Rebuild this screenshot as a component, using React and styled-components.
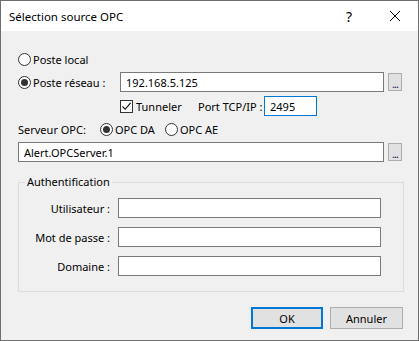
import React, { useState } from 'react';
import styled, { createGlobalStyle } from 'styled-components';

const uiFont = "'Noto Sans', 'Liberation Sans', sans-serif";

const GlobalStyle = createGlobalStyle`
 html, body {
  margin: 0;
  padding: 0;
  background: #ffffff;
 }
 body {
  font-family: ${uiFont};
  font-size: 11px;
  color: #000000;
 }
`;

export default function App() {
 const [source, setSource] = useState('reseau');
 const [server, setServer] = useState('da');
 const [tunnel, setTunnel] = useState(true);

 return (
  <Window>
   <GlobalStyle />
   <TitleBar>
    <Title>Sélection source OPC</Title>
    <TitleButton>?</TitleButton>
    <TitleButton>
     <svg width='12' height='12' viewBox='0 0 12 12'>
      <path d='M1 1 L11 11 M11 1 L1 11' stroke='#000' strokeWidth='1' />
     </svg>
    </TitleButton>
   </TitleBar>

   <Body>
    <Row height={14} top={21}>
     <Choice onClick={() => setSource('local')}>
      <Radio checked={source === 'local'} />
      Poste local
     </Choice>
    </Row>

    <Row height={20} top={6}>
     <LabelCell width={102}>
      <Choice onClick={() => setSource('reseau')}>
       <Radio checked={source === 'reseau'} />
       Poste réseau :
      </Choice>
     </LabelCell>
     <TextField width={264} defaultValue='192.168.5.125' readOnly />
     <Browse>...</Browse>
    </Row>

    <Row height={20} top={4} indent={102}>
     <Choice width={78} onClick={() => setTunnel(!tunnel)}>
      <Check checked={tunnel}>
       {tunnel && (
        <svg width='11' height='11' viewBox='0 0 11 11'>
         <path d='M1.5 5.5 L4.2 8.3 L9.6 1.8' stroke='#000' strokeWidth='1.1' fill='none' />
        </svg>
       )}
      </Check>
      Tunneler
     </Choice>
     <Caption width={66}>Port TCP/IP :</Caption>
     <TextField width={53} focused defaultValue='2495' readOnly />
    </Row>

    <Row height={14} top={6}>
     <Caption width={82}>Serveur OPC:</Caption>
     <Choice width={65} onClick={() => setServer('da')}>
      <Radio checked={server === 'da'} />
      OPC DA
     </Choice>
     <Choice onClick={() => setServer('ae')}>
      <Radio checked={server === 'ae'} />
      OPC AE
     </Choice>
    </Row>

    <Row height={20} top={6}>
     <TextField width={366} defaultValue='Alert.OPCServer.1' readOnly />
     <Browse>...</Browse>
    </Row>

    <Group>
     <Legend>Authentification</Legend>
     <AuthGrid>
      <AuthLabel>Utilisateur :</AuthLabel>
      <TextField width={263} readOnly />
      <AuthLabel>Mot de passe :</AuthLabel>
      <TextField width={263} readOnly />
      <AuthLabel>Domaine :</AuthLabel>
      <TextField width={263} readOnly />
     </AuthGrid>
    </Group>

    <Footer>
     <DialogButton primary>OK</DialogButton>
     <DialogButton>Annuler</DialogButton>
    </Footer>
   </Body>
  </Window>
 );
}

const Window = styled.div`
 width: 419px;
 height: 341px;
 box-sizing: border-box;
 border: 1px solid #6e6e6e;
 background: #f0f0f0;
 display: flex;
 flex-direction: column;
`;

const TitleBar = styled.div`
 height: 30px;
 background: #ffffff;
 display: flex;
 align-items: center;
 padding-left: 8px;
 flex-shrink: 0;
`;

const Title = styled.div`
 flex: 1;
 font-size: 11.5px;
 color: #000000;
`;

const TitleButton = styled.div`
 width: 46px;
 height: 30px;
 display: flex;
 align-items: center;
 justify-content: center;
 font-size: 14px;
`;

const Body = styled.div`
 flex: 1;
 display: flex;
 flex-direction: column;
 padding: 0 15px 0 17px;
`;

const Row = styled.div`
 display: flex;
 align-items: center;
 height: ${(p) => p.height}px;
 margin-top: ${(p) => p.top}px;
 padding-left: ${(p) => p.indent || 0}px;
`;

const LabelCell = styled.div`
 width: ${(p) => p.width}px;
 flex-shrink: 0;
 display: flex;
 align-items: center;
`;

const Choice = styled.label`
 display: flex;
 align-items: center;
 gap: 2px;
 cursor: default;
 white-space: nowrap;
 width: ${(p) => (p.width ? `${p.width}px` : 'auto')};
 flex-shrink: 0;
`;

const Radio = styled.span`
 width: 13px;
 height: 13px;
 box-sizing: border-box;
 border: 1px solid #333333;
 border-radius: 50%;
 background: #ffffff;
 display: flex;
 align-items: center;
 justify-content: center;
 flex-shrink: 0;
 &::after {
  content: '';
  width: 7px;
  height: 7px;
  border-radius: 50%;
  background: #333333;
  display: ${(p) => (p.checked ? 'block' : 'none')};
 }
`;

const Check = styled.span`
 width: 13px;
 height: 13px;
 box-sizing: border-box;
 border: 1px solid #333333;
 background: #ffffff;
 display: flex;
 align-items: center;
 justify-content: center;
 flex-shrink: 0;
 margin-right: 1px;
`;

const Caption = styled.span`
 width: ${(p) => p.width}px;
 flex-shrink: 0;
 white-space: nowrap;
`;

const TextField = styled.input`
 width: ${(p) => p.width}px;
 height: 20px;
 box-sizing: border-box;
 border: 1px solid ${(p) => (p.focused ? '#0078d7' : '#7a7a7a')};
 background: #ffffff;
 padding: 0 5px;
 margin: 0;
 font-family: ${uiFont};
 font-size: 11px;
 color: #000000;
 outline: none;
 flex-shrink: 0;
`;

const Browse = styled.div`
 width: 14px;
 height: 18px;
 box-sizing: border-box;
 margin-left: 4px;
 border: 1px solid #adadad;
 background: #e1e1e1;
 display: flex;
 align-items: center;
 justify-content: center;
 font-size: 11px;
 letter-spacing: -1px;
 line-height: 1;
 padding-top: 2px;
 color: #1a1a4a;
`;

const Group = styled.div`
 position: relative;
 margin-top: 20px;
 width: 386px;
 height: 110px;
 box-sizing: border-box;
 border: 1px solid #dcdcdc;
 padding: 15px 0 0 0;
`;

const Legend = styled.span`
 position: absolute;
 top: -9px;
 left: 6px;
 padding: 0 2px;
 background: #f0f0f0;
 line-height: 16px;
`;

const AuthGrid = styled.div`
 display: grid;
 grid-template-columns: 91px 263px;
 column-gap: 8px;
 row-gap: 9px;
 align-items: center;
`;

const AuthLabel = styled.span`
 text-align: right;
 white-space: nowrap;
`;

const Footer = styled.div`
 display: flex;
 justify-content: flex-end;
 gap: 7px;
 margin-top: 15px;
`;

const DialogButton = styled.button`
 width: ${(p) => (p.primary ? 72 : 73)}px;
 height: 22px;
 box-sizing: border-box;
 border: ${(p) => (p.primary ? '2px solid #0078d7' : '1px solid #adadad')};
 background: #e1e1e1;
 font-family: ${uiFont};
 font-size: 11px;
 color: #000000;
 padding: 0;
 margin: 0;
`;
